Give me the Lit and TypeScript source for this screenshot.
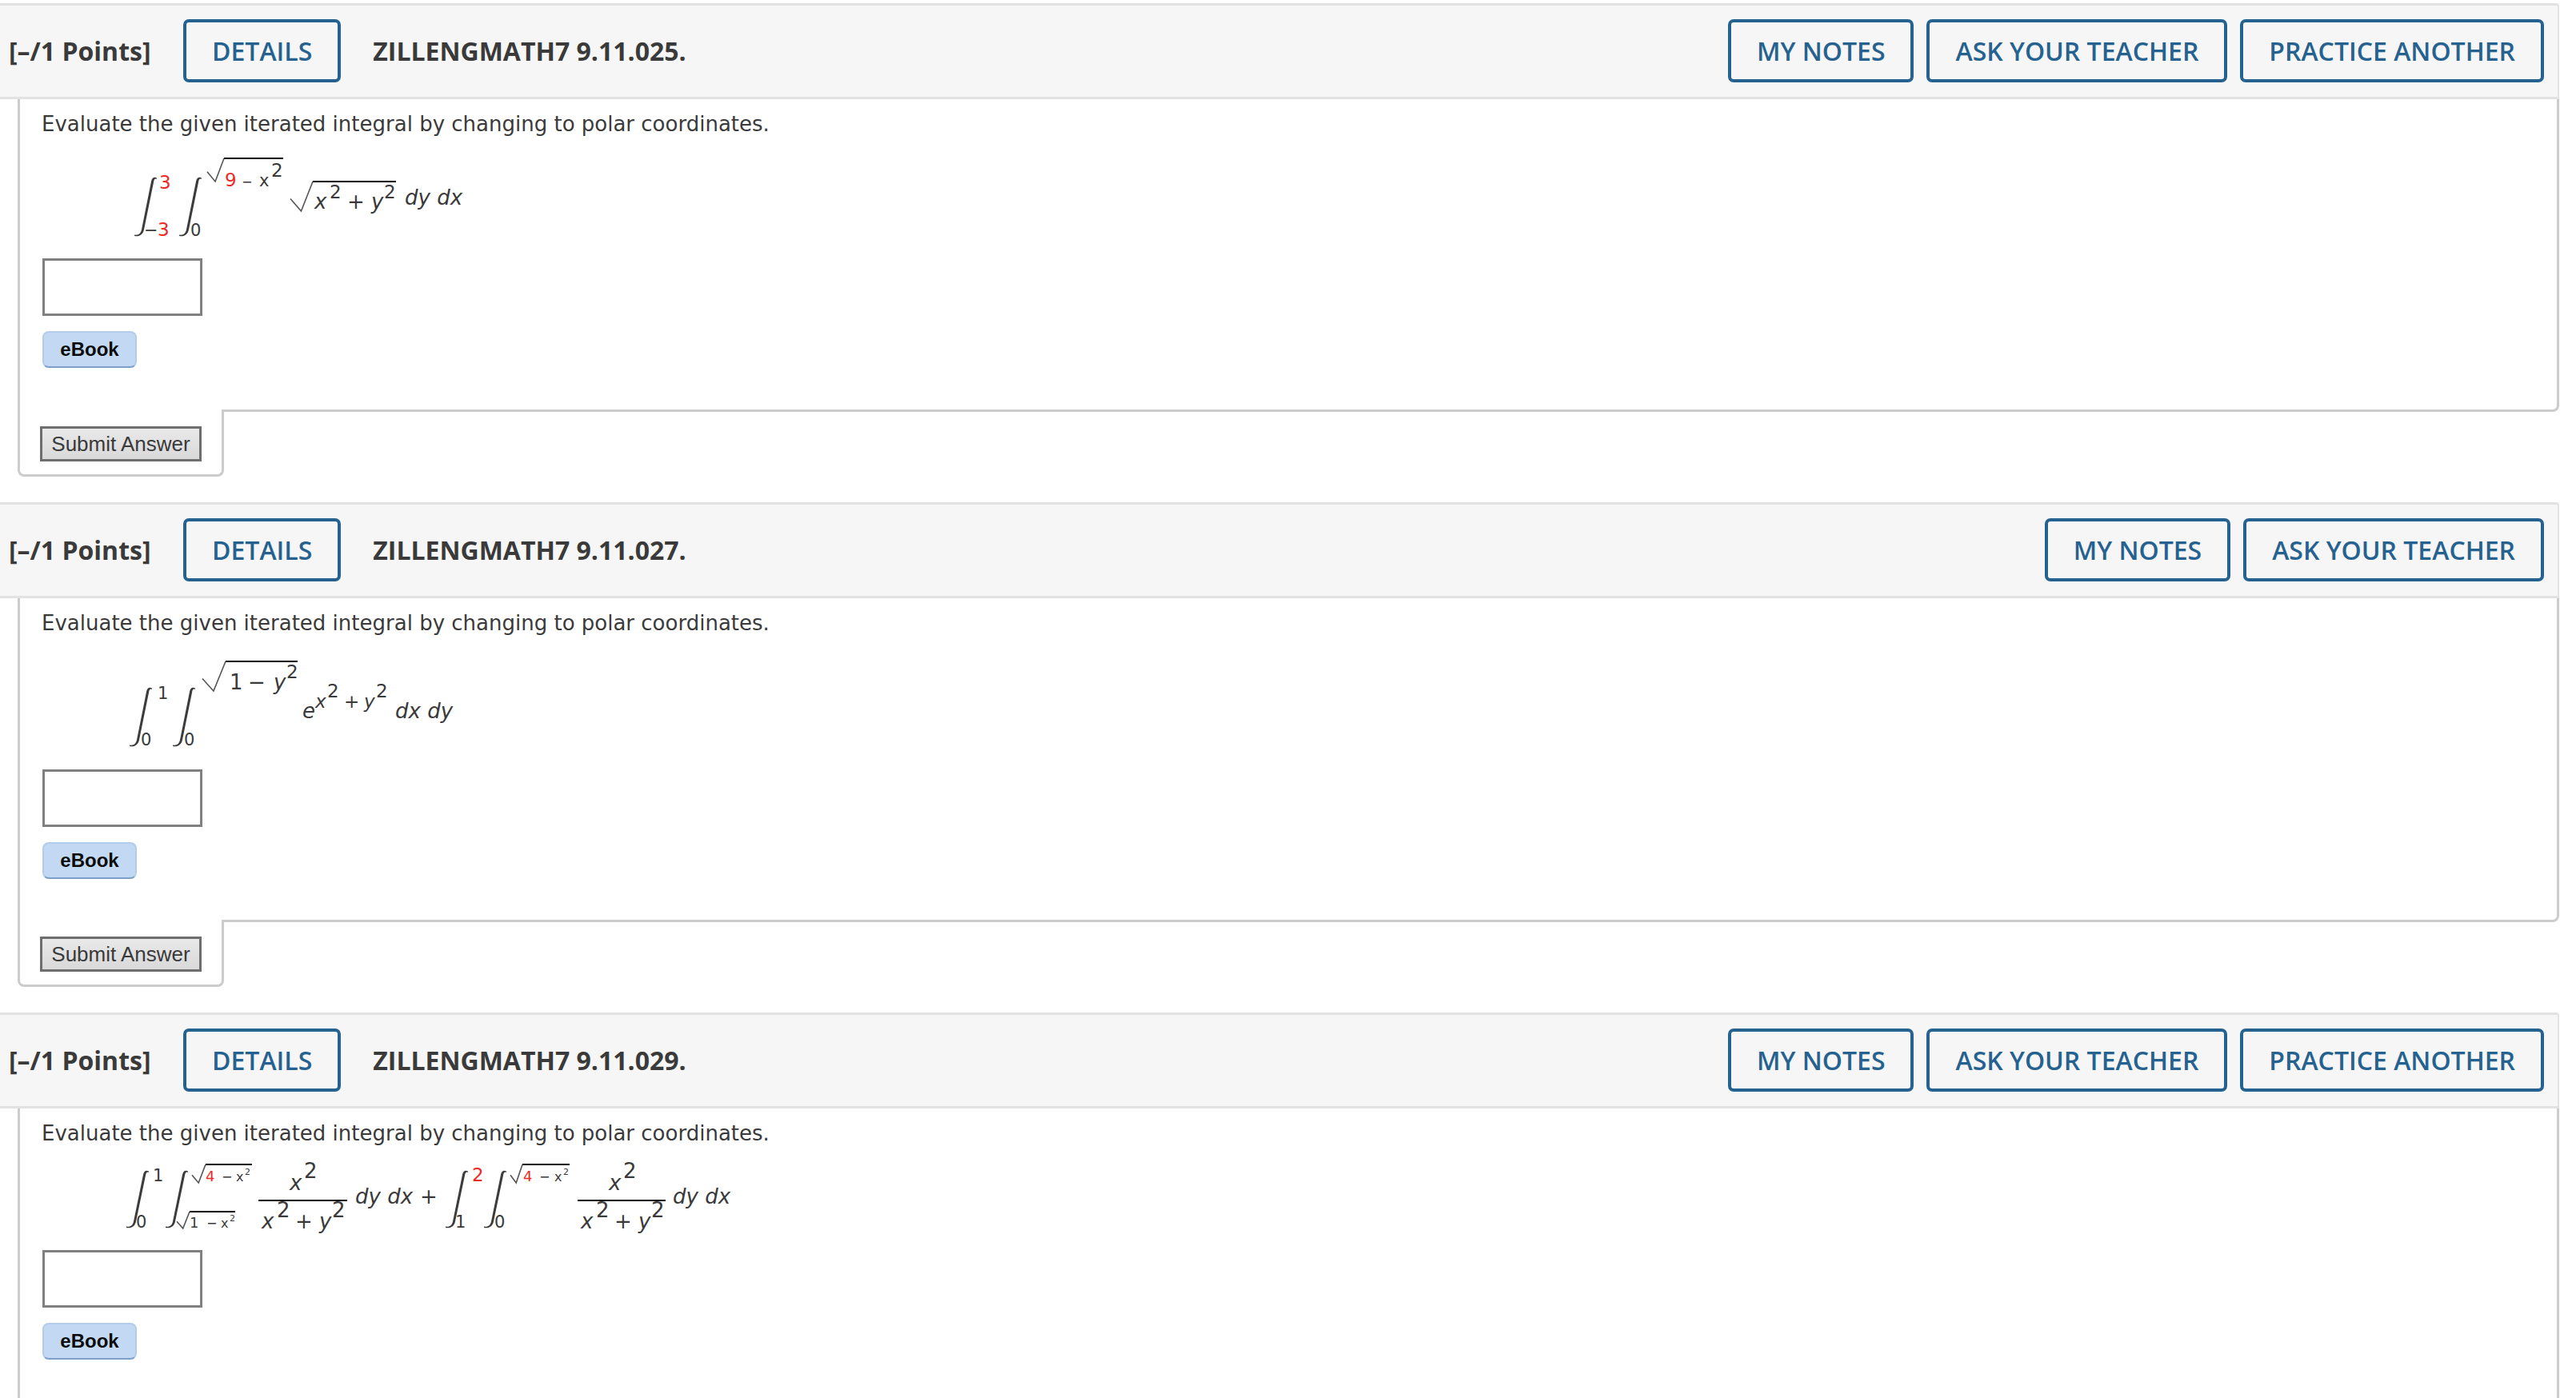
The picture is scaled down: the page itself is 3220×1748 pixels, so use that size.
import { LitElement, html, svg, css } from "lit";
import { customElement } from "lit/decorators.js";

// [x, baseline, text, classes]
type Glyph = [number, number, string, string];

const integral = (x: number, y: number, h = 74) => svg`
  <path class="int" transform="translate(${x} ${y}) scale(1 ${h / 74})"
    d="M29 1.5C26 0 23 .5 22 6L10 66C9 71 6 73.5 1 72.5L1 74C7 75.5 12 72 13 66L25 7C25.7 2.8 27 2 29 3Z" />`;

// sx: left tip of the tick, top: overbar y, bottom: lowest point of the tick
const root = (sx: number, barX: number, barEnd: number, top: number, bottom: number) => {
  const mid = sx + (barX - sx) * 0.48;
  const start = bottom - (bottom - top) * 0.42;
  return svg`
    <path class="tick" d="M${sx} ${start}L${mid} ${bottom}L${barX} ${top}" />
    <rect class="bar" x=${barX} y=${top - 1} width=${barEnd - barX} height="2" />`;
};

const glyphs = (list: Glyph[]) =>
  list.map(([x, y, s, c]) => svg`<text x=${x} y=${y} class=${c}>${s}</text>`);

const frac = (x: number, end: number, off: number) => svg`
  <rect class="bar" x=${x} y="1502" width=${end - x} height="2" />
  ${glyphs([
    [off + 39, 1490, "x", "lg i"],
    [off + 57, 1475, "2", "lg"],
    [off + 4, 1538, "x", "lg i"],
    [off + 23, 1524, "2", "lg"],
    [off + 46, 1538, "+", "lg"],
    [off + 76, 1538, "y", "lg i"],
    [off + 92, 1524, "2", "lg"],
  ])}`;

const formulaOne = svg`
  <svg class="math" width="900" height="130" viewBox="52 180 900 130">
    ${integral(167, 220)} ${integral(223, 220)}
    ${root(259, 280, 354, 197, 226)}
    ${root(363, 391, 495, 226, 263)}
    ${glyphs([
      [199, 235, "3", "sm red"],
      [180, 294, "−", "s2"],
      [197, 294, "3", "sm red"],
      [238, 294, "0", "s2"],
      [281, 232, "9", "sm red"],
      [302, 232, "−", "xs"],
      [324, 232, "x", "s2"],
      [339, 220, "2", "sm"],
      [393, 260, "x", "lg i"],
      [412, 247, "2", "md"],
      [434, 260, "+", "lg"],
      [464, 260, "y", "lg i"],
      [480, 247, "2", "md"],
      [506, 255, "dy dx", "lg i"],
    ])}
  </svg>`;

const formulaTwo = svg`
  <svg class="math" width="900" height="135" viewBox="52 820 900 135">
    ${integral(161, 862)} ${integral(215, 862)}
    ${root(253, 282, 372, 830, 867)}
    ${glyphs([
      [197, 877, "1", "s2"],
      [176, 935, "0", "s2"],
      [230, 935, "0", "s2"],
      [287, 865, "1", "lg"],
      [310, 865, "−", "lg"],
      [342, 865, "y", "lg i"],
      [358, 851, "2", "md"],
      [378, 901, "e", "lg i"],
      [394, 888, "x", "md i"],
      [409, 875, "2", "md"],
      [430, 888, "+", "sm"],
      [455, 888, "y", "sm i"],
      [470, 875, "2", "md"],
      [494, 901, "dx dy", "lg i"],
    ])}
  </svg>`;

const formulaThree = svg`
  <svg class="math" width="900" height="100" viewBox="52 1450 900 100">
    ${integral(157, 1465, 72)} ${integral(206, 1465, 72)}
    ${integral(556, 1465, 72)} ${integral(604, 1465, 72)}
    ${root(240, 257, 315, 1458, 1481)}
    ${root(221, 237, 294, 1517, 1538)}
    ${root(638, 653, 712, 1458, 1481)}
    ${frac(323, 434, 323)}
    ${frac(722, 832, 722)}
    ${glyphs([
      [191, 1479, "1", "s2"],
      [170, 1537, "0", "s2"],
      [257, 1479, "4", "r red"],
      [277, 1479, "−", "xs"],
      [295, 1479, "x", "xs"],
      [306, 1471, "2", "xxs"],
      [237, 1537, "1", "r"],
      [258, 1537, "−", "xs"],
      [276, 1537, "x", "xs"],
      [287, 1529, "2", "xxs"],
      [444, 1507, "dy dx", "lg i"],
      [525, 1507, "+", "lg"],
      [590, 1479, "2", "sm red"],
      [569, 1537, "1", "s2"],
      [618, 1537, "0", "s2"],
      [654, 1479, "4", "r red"],
      [674, 1479, "−", "xs"],
      [693, 1479, "x", "xs"],
      [704, 1471, "2", "xxs"],
      [841, 1507, "dy dx", "lg i"],
    ])}
  </svg>`;

const questions = [
  { code: "ZILLENGMATH7 9.11.025.", practice: true, math: formulaOne, cls: "q1", submit: true },
  { code: "ZILLENGMATH7 9.11.027.", practice: false, math: formulaTwo, cls: "q2", submit: true },
  { code: "ZILLENGMATH7 9.11.029.", practice: true, math: formulaThree, cls: "q3", submit: false },
];

@customElement("app-root")
export class AppRoot extends LitElement {
  static styles = css`
    :host {
      display: block;
      height: 1748px;
      overflow: hidden;
      background: #fff;
      color: #3a3a3a;
    }
    .question {
      width: 3199px;
      margin-bottom: 32px;
    }
    .question:first-child {
      padding-top: 4px;
    }
    header {
      box-sizing: border-box;
      height: 120px;
      display: flex;
      align-items: center;
      padding: 0 17px 1px 11px;
      background: #f6f6f6;
      border-top: 3px solid #e2e2e2;
      border-bottom: 3px solid #e2e2e2;
      border-right: 2px solid #e2e2e2;
      border-top-right-radius: 4px;
      font-family: "Open Sans", sans-serif;
      font-size: 32px;
    }
    .points {
      font-weight: 700;
      width: 218px;
      white-space: nowrap;
    }
    .title {
      font-weight: 700;
      margin-left: 40px;
      flex: 1;
      white-space: nowrap;
    }
    .actions {
      display: flex;
      gap: 16px;
    }
    .btn {
      box-sizing: border-box;
      height: 79px;
      padding: 0 32px;
      display: flex;
      align-items: center;
      border: 4px solid #26628f;
      border-radius: 7px;
      color: #26628f;
      font-weight: 600;
      white-space: nowrap;
    }
    .panel {
      margin-left: 22px;
      border: 3px solid #ccc;
      border-top: none;
      border-bottom-right-radius: 8px;
      padding: 15px 0 0 28px;
      font-family: "DejaVu Sans", sans-serif;
    }
    .q1 .panel {
      height: 373px;
    }
    .q2 .panel {
      height: 387px;
    }
    .q3 .panel {
      height: 400px;
      border-bottom: none;
    }
    .prompt {
      margin-left: -1px;
      font-size: 26px;
      line-height: 32px;
    }
    .math {
      display: block;
      margin-left: -1px;
    }
    .q1 .math {
      margin-top: 10px;
      margin-bottom: 12px;
    }
    .q2 .math {
      margin-top: 22px;
      margin-bottom: 10px;
    }
    .q3 .math {
      margin-top: 15px;
      margin-bottom: 15px;
    }
    text {
      fill: #3a3a3a;
      font-family: "DejaVu Sans", sans-serif;
    }
    text.lg {
      font-size: 26px;
    }
    text.md {
      font-size: 23px;
    }
    text.sm {
      font-size: 23px;
    }
    text.s2 {
      font-size: 21px;
    }
    text.r {
      font-size: 18px;
    }
    text.xs {
      font-size: 16px;
    }
    text.xxs {
      font-size: 11px;
    }
    text.i {
      font-style: italic;
    }
    text.red {
      fill: #ee2a24;
    }
    .int {
      fill: #3c3c3c;
    }
    .tick {
      fill: none;
      stroke: #555;
      stroke-width: 1.6;
    }
    .bar {
      fill: #000;
    }
    .answer {
      box-sizing: border-box;
      display: block;
      width: 200px;
      height: 72px;
      border: 3px solid #808080;
      background: #fff;
    }
    .ebook {
      box-sizing: border-box;
      width: 118px;
      height: 46px;
      margin-top: 19px;
      display: flex;
      align-items: center;
      justify-content: center;
      background: #c3d9f3;
      border: 2px solid #b2cdec;
      border-bottom-color: #7f9fcb;
      border-radius: 8px;
      color: #0c0c0c;
      font-family: "Liberation Sans", sans-serif;
      font-size: 24px;
      font-weight: 700;
    }
    .tab {
      box-sizing: border-box;
      width: 258px;
      height: 84px;
      margin: -3px 0 0 22px;
      padding: 21px 0 0 25px;
      background: #fff;
      border: 3px solid #ccc;
      border-top: none;
      border-radius: 0 0 8px 8px;
    }
    .submit {
      box-sizing: border-box;
      width: 202px;
      height: 44px;
      display: flex;
      align-items: center;
      justify-content: center;
      border: 3px solid #6e6e6e;
      background: linear-gradient(#e9e9e9, #d9d9d9);
      font-family: "Liberation Sans", sans-serif;
      font-size: 26px;
    }
  `;

  render() {
    return html`
      ${questions.map(
        (q) => html`
          <section class="question ${q.cls}">
            <header>
              <span class="points">[–/1 Points]</span>
              <span class="btn">DETAILS</span>
              <span class="title">${q.code}</span>
              <div class="actions">
                <span class="btn">MY NOTES</span>
                <span class="btn">ASK YOUR TEACHER</span>
                ${q.practice ? html`<span class="btn">PRACTICE ANOTHER</span>` : null}
              </div>
            </header>
            <div class="panel">
              <div class="prompt">Evaluate the given iterated integral by changing to polar coordinates.</div>
              ${q.math}
              <input class="answer" type="text" />
              <div class="ebook">eBook</div>
            </div>
            ${q.submit
              ? html`<div class="tab"><div class="submit">Submit Answer</div></div>`
              : null}
          </section>
        `
      )}
    `;
  }
}
